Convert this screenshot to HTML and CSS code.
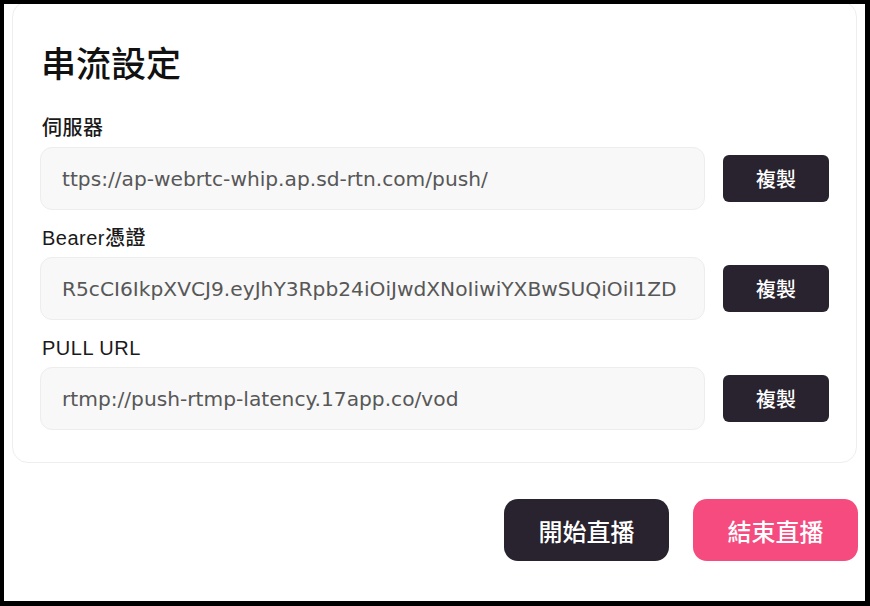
FILE: index.html
```html
<!DOCTYPE html>
<html lang="zh-Hant">
<head>
<meta charset="utf-8">
<title>串流設定</title>
<link rel="stylesheet" href="styles.css">
</head>
<body>
<div class="frame">
  <section class="card">
    <h1 class="title">串流設定</h1>
    <div class="field">
      <div class="label">伺服器</div>
      <div class="row">
        <div class="input">ttps://ap-webrtc-whip.ap.sd-rtn.com/push/</div>
        <button class="copy">複製</button>
      </div>
    </div>
    <div class="field">
      <div class="label">Bearer憑證</div>
      <div class="row">
        <div class="input">R5cCI6IkpXVCJ9.eyJhY3Rpb24iOiJwdXNoIiwiYXBwSUQiOiI1ZD</div>
        <button class="copy">複製</button>
      </div>
    </div>
    <div class="field">
      <div class="label">PULL URL</div>
      <div class="row">
        <div class="input">rtmp://push-rtmp-latency.17app.co/vod</div>
        <button class="copy">複製</button>
      </div>
    </div>
  </section>
  <div class="actions">
    <button class="big dark">開始直播</button>
    <button class="big pink">結束直播</button>
  </div>
</div>
</body>
</html>
```

FILE: styles.css
```css
* { box-sizing: border-box; }
html, body { margin: 0; padding: 0; }
body {
  background: #000;
  font-family: "Liberation Sans", "Noto Sans CJK TC", sans-serif;
  color: #1d1d1f;
}
.frame {
  margin: 4px 5px 5px 4px;
  height: 597px;
  background: #fff;
  overflow: hidden;
  padding: 0 8px;
}
.card {
  margin-top: -3px;
  border: 1px solid #eeeeee;
  border-radius: 16px;
  padding: 41px 27px 32px 27px;
  display: flex;
  flex-direction: column;
  gap: 14px;
}
.title {
  margin: 0 0 13px 0;
  padding-left: 1px;
  font-size: 35px;
  line-height: 44px;
  font-weight: 500;
  color: #111;
}
.field {
  display: flex;
  flex-direction: column;
  gap: 5px;
}
.label {
  padding-left: 2px;
  font-size: 20px;
  line-height: 28px;
  font-weight: 500;
  letter-spacing: 0.5px;
  color: #1a1a1a;
}
.row {
  display: flex;
  align-items: center;
  gap: 18px;
}
.input {
  flex: 1;
  height: 63px;
  display: flex;
  align-items: center;
  padding: 0 21px;
  background: #f8f8f8;
  border: 1px solid #ededed;
  border-radius: 12px;
  font-family: "DejaVu Sans", "Noto Sans CJK TC", sans-serif;
  font-size: 20.2px;
  color: #575757;
  white-space: nowrap;
  overflow: hidden;
}
.copy {
  width: 106px;
  height: 47px;
  border: none;
  border-radius: 6px;
  background: #28232e;
  color: #fff;
  font-family: inherit;
  font-size: 20px;
  font-weight: 500;
  padding: 0;
}
.actions {
  margin-top: 36px;
  margin-right: -1px;
  display: flex;
  justify-content: flex-end;
  gap: 24px;
}
.big {
  width: 165px;
  height: 62px;
  border: none;
  border-radius: 14px;
  color: #fff;
  font-family: inherit;
  font-size: 24px;
  font-weight: 500;
  padding: 0;
}
.dark { background: #28232e; }
.pink { background: #f54b7e; }
```
